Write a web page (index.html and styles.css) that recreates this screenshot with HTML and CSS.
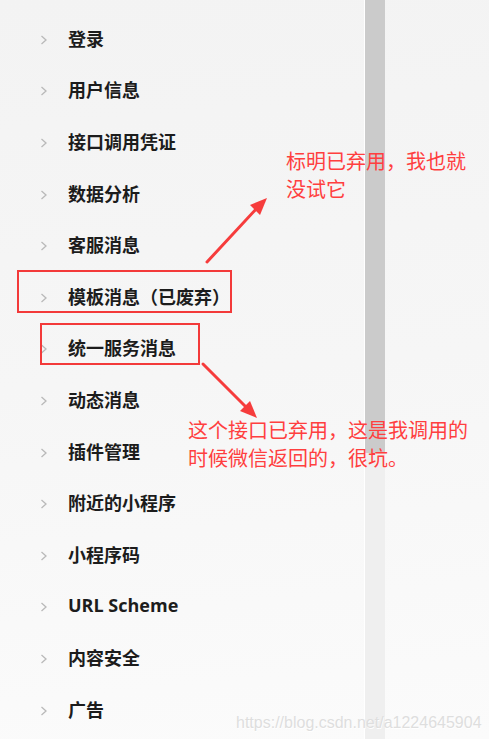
FILE: index.html
```html
<!DOCTYPE html>
<html lang="zh">
<head>
<meta charset="utf-8">
<link rel="stylesheet" href="styles.css">
</head>
<body>
<div class="page">
  <ul class="menu">
    <li class="item"><svg class="chev" viewBox="0 0 8 12"><polyline points="1.5,2 6,6 1.5,10"/></svg><span class="label">登录</span></li>
    <li class="item"><svg class="chev" viewBox="0 0 8 12"><polyline points="1.5,2 6,6 1.5,10"/></svg><span class="label">用户信息</span></li>
    <li class="item"><svg class="chev" viewBox="0 0 8 12"><polyline points="1.5,2 6,6 1.5,10"/></svg><span class="label">接口调用凭证</span></li>
    <li class="item"><svg class="chev" viewBox="0 0 8 12"><polyline points="1.5,2 6,6 1.5,10"/></svg><span class="label">数据分析</span></li>
    <li class="item"><svg class="chev" viewBox="0 0 8 12"><polyline points="1.5,2 6,6 1.5,10"/></svg><span class="label">客服消息</span></li>
    <li class="item"><svg class="chev" viewBox="0 0 8 12"><polyline points="1.5,2 6,6 1.5,10"/></svg><span class="label">模板消息（已废弃）</span></li>
    <li class="item"><svg class="chev" viewBox="0 0 8 12"><polyline points="1.5,2 6,6 1.5,10"/></svg><span class="label">统一服务消息</span></li>
    <li class="item"><svg class="chev" viewBox="0 0 8 12"><polyline points="1.5,2 6,6 1.5,10"/></svg><span class="label">动态消息</span></li>
    <li class="item"><svg class="chev" viewBox="0 0 8 12"><polyline points="1.5,2 6,6 1.5,10"/></svg><span class="label">插件管理</span></li>
    <li class="item"><svg class="chev" viewBox="0 0 8 12"><polyline points="1.5,2 6,6 1.5,10"/></svg><span class="label">附近的小程序</span></li>
    <li class="item"><svg class="chev" viewBox="0 0 8 12"><polyline points="1.5,2 6,6 1.5,10"/></svg><span class="label">小程序码</span></li>
    <li class="item"><svg class="chev" viewBox="0 0 8 12"><polyline points="1.5,2 6,6 1.5,10"/></svg><span class="label latin">URL Scheme</span></li>
    <li class="item"><svg class="chev" viewBox="0 0 8 12"><polyline points="1.5,2 6,6 1.5,10"/></svg><span class="label">内容安全</span></li>
    <li class="item"><svg class="chev" viewBox="0 0 8 12"><polyline points="1.5,2 6,6 1.5,10"/></svg><span class="label">广告</span></li>
  </ul>
  <div class="scrollbar"><div class="thumb"></div><div class="track"></div></div>
  <div class="rest"></div>
</div>

<div class="box box-1"></div>
<div class="box box-2"></div>

<svg class="arrows" viewBox="0 0 489 739" width="489" height="739">
  <line x1="207" y1="262" x2="258" y2="207" class="shaft"/>
  <polygon points="267,198 250,205 260,215" class="head"/>
  <line x1="203" y1="364" x2="249" y2="410" class="shaft"/>
  <polygon points="257,418 250,401 240,411" class="head"/>
</svg>

<p class="note note-1">标明已弃用，我也就<br>没试它</p>
<p class="note note-2">这个接口已弃用，这是我调用的<br>时候微信返回的，很坑。</p>

<div class="watermark">https://blog.csdn.net/a1224645904</div>
</body>
</html>
```

FILE: styles.css
```css
* { box-sizing: border-box; }
html, body { margin: 0; padding: 0; }
body {
  width: 489px;
  height: 739px;
  overflow: hidden;
  position: relative;
  background: linear-gradient(175deg, #f3f3f3 0%, #f6f6f6 50%, #fbfbfb 100%);
  font-family: "Noto Sans CJK SC", "Noto Sans", sans-serif;
}
.page {
  display: flex;
  height: 739px;
}
.menu {
  list-style: none;
  margin: 0;
  padding: 12px 0 0 40px;
  width: 364px;
  flex: none;
}
.item {
  height: 51.6px;
  display: flex;
  align-items: center;
}
.chev {
  width: 8px;
  height: 12px;
  margin: 4px 20px 0 0;
  fill: none;
  stroke: #b9b9b9;
  stroke-width: 1.3;
  flex: none;
}
.label {
  font-size: 18px;
  font-weight: 700;
  color: #1c1c1c;
  line-height: 24px;
}
.label.latin {
  font-family: "Open Sans", "Noto Sans CJK SC", sans-serif;
}
.scrollbar {
  width: 21px;
  height: 739px;
  flex: none;
  border-left: 1px solid #ffffff;
  display: flex;
  flex-direction: column;
}
.thumb { height: 453px; flex: none; background: #cbcbcb; }
.track { flex: 1; background: #efefef; }
.rest { flex: 1; }

.box {
  position: absolute;
  border: 2.5px solid #f33a3a;
}
.box-1 { left: 17px; top: 270px; width: 215px; height: 43px; }
.box-2 { left: 40px; top: 323px; width: 160px; height: 42px; }

.arrows {
  position: absolute;
  left: 0;
  top: 0;
}
.shaft { stroke: #f63c3c; stroke-width: 3; stroke-linecap: round; }
.head { fill: #f63c3c; }

.note {
  position: absolute;
  margin: 0;
  font-size: 20px;
  font-weight: 400;
  line-height: 27.5px;
  color: #ff3f3f;
  white-space: nowrap;
}
.note-1 { left: 286px; top: 147px; }
.note-2 { left: 188px; top: 416px; }

.watermark {
  position: absolute;
  left: 236px;
  top: 714px;
  font-family: "Liberation Sans", Arial, sans-serif;
  font-size: 16px;
  color: #dedede;
  text-shadow: 0.5px 0.5px 0 #fff;
  white-space: nowrap;
}
```
